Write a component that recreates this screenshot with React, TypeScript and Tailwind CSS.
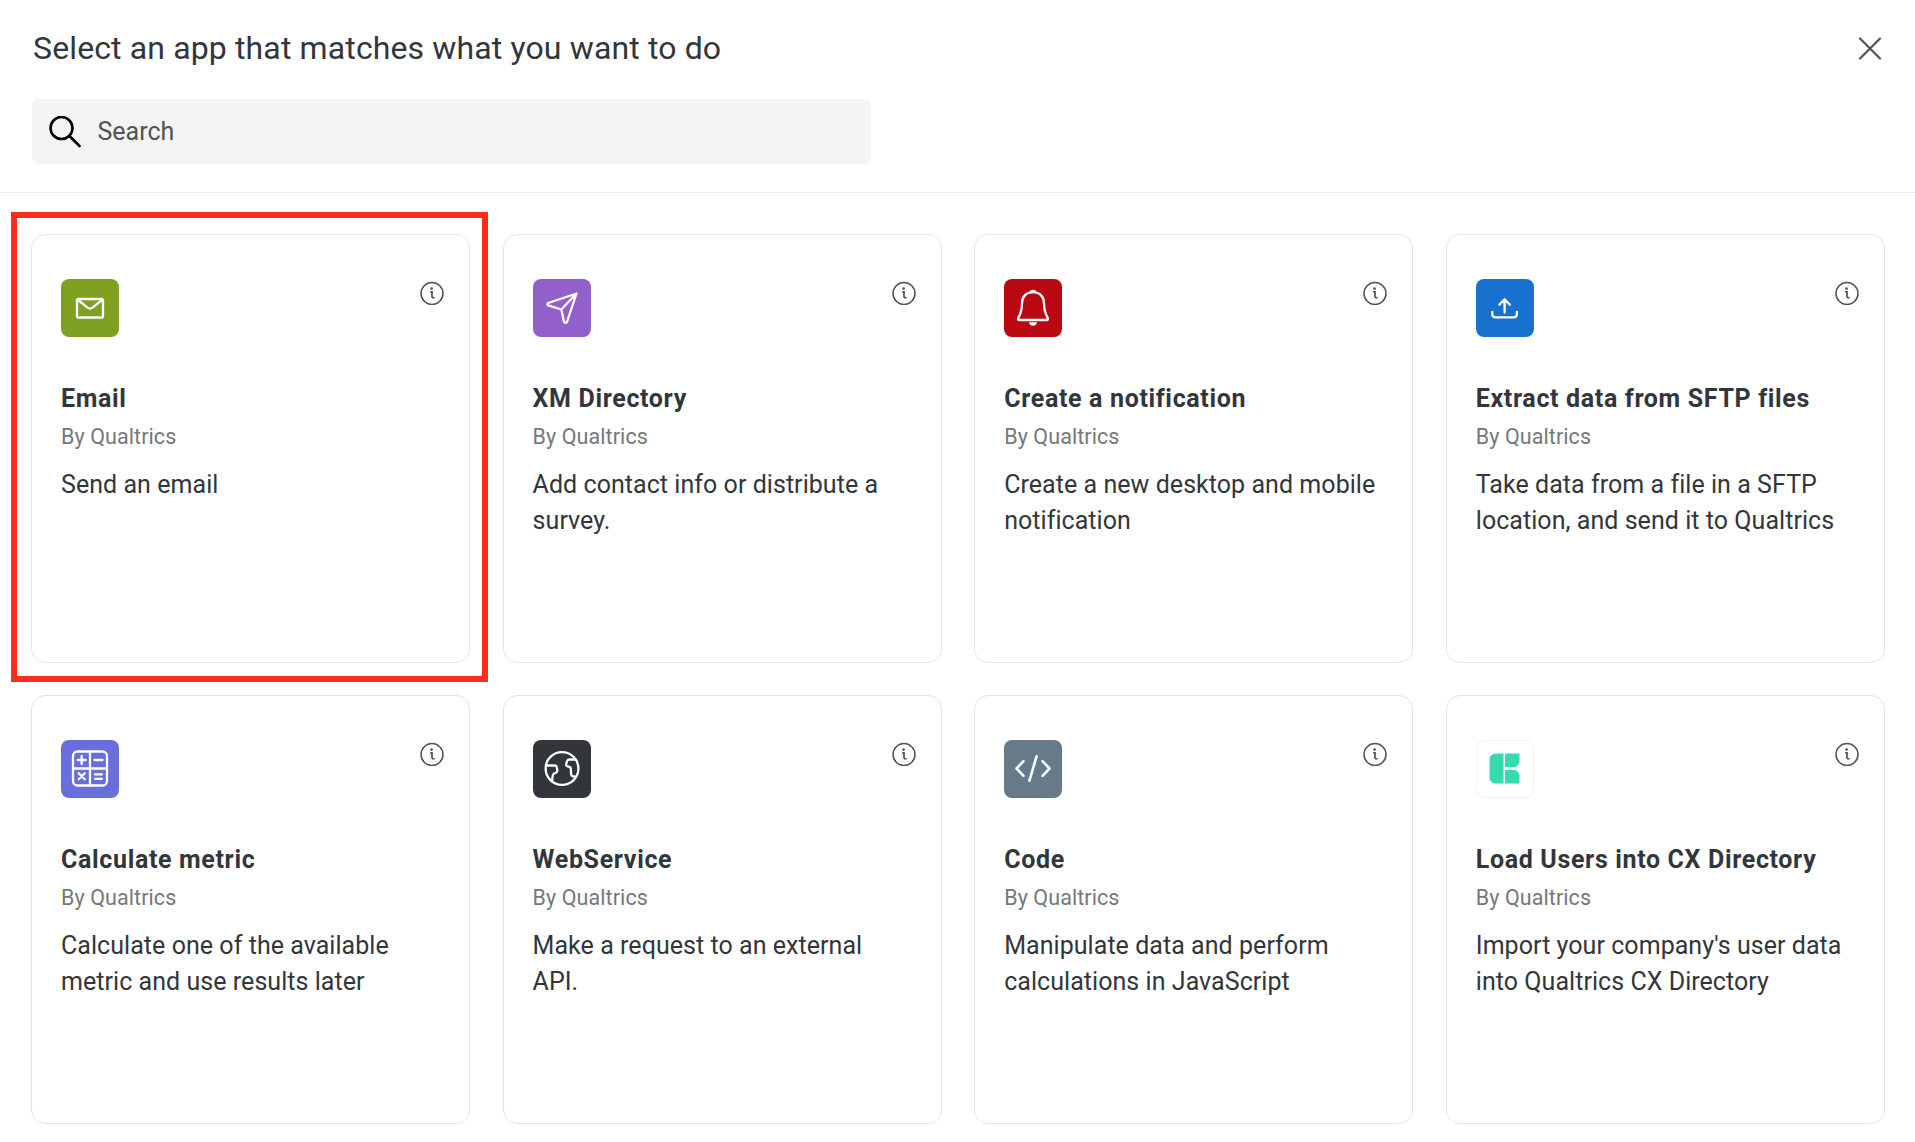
import type { ReactNode } from "react";

type AppCard = {
  title: string;
  description: string[];
  tile: string;
  icon: ReactNode;
  highlighted?: boolean;
};

const line = {
  fill: "none",
  stroke: "currentColor",
  strokeWidth: 2.3,
  strokeLinecap: "round" as const,
  strokeLinejoin: "round" as const,
};

const cards: AppCard[] = [
  {
    title: "Email",
    description: ["Send an email"],
    tile: "bg-[#7ea122]",
    highlighted: true,
    icon: (
      <g {...line}>
        <rect x="16" y="20" width="26" height="18.5" rx="1.5" />
        <path d="M17 21l9.5 7.6q2.5 1.8 5 0L41 21" />
      </g>
    ),
  },
  {
    title: "XM Directory",
    description: ["Add contact info or distribute a", "survey."],
    tile: "bg-[#925fcc]",
    icon: (
      <path
        {...line}
        d="M43.5 14.5L15.2 24Q13.5 25.2 15.2 26.3L28.3 30.5L31 42.8Q32.6 45 34 42.8L43.5 14.5L28.3 30.5"
      />
    ),
  },
  {
    title: "Create a notification",
    description: ["Create a new desktop and mobile", "notification"],
    tile: "bg-[#b90812]",
    icon: (
      <g>
        <path
          {...line}
          d="M29 13.2C22 13.2 18 18 18 24C18 31 17.4 33.5 14.6 38.2Q13.3 41 15 41H43Q44.7 41 43.4 38.2C40.6 33.5 40 31 40 24C40 18 36 13.2 29 13.2z"
        />
        <path d="M26 13q0-2.2 3-2.2T32 13zM25 43.2h8q-.7 3.6-4 3.6t-4-3.6z" fill="currentColor" />
      </g>
    ),
  },
  {
    title: "Extract data from SFTP files",
    description: ["Take data from a file in a SFTP", "location, and send it to Qualtrics"],
    tile: "bg-[#1971cf]",
    icon: (
      <path {...line} d="M28.6 33.5V20.5M23.4 25.6l5.2-5.3 5.2 5.3M16.3 33v2.3q0 3 3 3h18.6q3 0 3-3V33" />
    ),
  },
  {
    title: "Calculate metric",
    description: ["Calculate one of the available", "metric and use results later"],
    tile: "bg-[#686edb]",
    icon: (
      <g {...line}>
        <rect x="12" y="11.5" width="34" height="34" rx="4.5" />
        <path d="M29 11.5v34M12 28.5h34M16.7 20h8M20.7 16v8M33.5 20h8M17.7 33.2l6 6M23.7 33.2l-6 6M34 34.3h7M34 38.8h7" />
      </g>
    ),
  },
  {
    title: "WebService",
    description: ["Make a request to an external", "API."],
    tile: "bg-[#32363a]",
    icon: (
      <g {...line}>
        <circle cx="29" cy="28.5" r="16.4" />
        <path d="M13.5 25.5h8.2q1.7 0 2 1.7l.6 3q.2 1.5-1 2.3l-2.5 1.3q-1 .6-1.1 2l-.6 5M42.5 19.5h-6.2q-1.8 0-2.3 1.7l-.8 3q-.3 1.8 1.3 2.2l2 .5q1.2 .4 1.3 1.6l.4 6.2q.2 1.5 1.5 1.7h2" />
      </g>
    ),
  },
  {
    title: "Code",
    description: ["Manipulate data and perform", "calculations in JavaScript"],
    tile: "bg-[#677a8a]",
    icon: <path {...line} strokeWidth={2.6} d="M19.5 21.2l-7 7.3 7 7.3M38.5 21.2l7 7.3-7 7.3M32.6 16.3L25.4 40.7" />,
  },
  {
    title: "Load Users into CX Directory",
    description: ["Import your company's user data", "into Qualtrics CX Directory"],
    tile: "border border-[#f2f2f2] bg-white",
    icon: (
      <path
        fill="#33dbae"
        d="M19 13h8.5v31H19q-6-1-6-6V19q0-5 6-6zM29 13h15v8.5q-1 5-5.5 5.5H29zM29 30h9.5q4.5 .5 5.5 5.5V44H29z"
      />
    ),
  },
];

function InfoIcon() {
  return (
    <svg viewBox="0 0 24 24" className="mt-[2px] size-6 text-[#505357]" fill="none" stroke="currentColor">
      <circle cx="12" cy="12.5" r="11" strokeWidth="1.5" />
      <path d="M10.2 10.8H12V15.8Q12 17 14.6 16.7" strokeWidth="1.7" />
      <circle cx="11.6" cy="7.6" r="1.3" fill="currentColor" stroke="none" />
    </svg>
  );
}

function Card({ card }: { card: AppCard }) {
  return (
    <article className="relative h-[429px] rounded-[14px] border border-[#e4e5e6] px-[29px] pt-[44px]">
      {card.highlighted && (
        <div className="pointer-events-none absolute -top-[23px] -left-[21px] h-[470px] w-[477px] border-6 border-[#ff2b1d]" />
      )}
      <div className="flex items-start justify-between">
        <div className={`size-[58px] overflow-hidden rounded-[8px] text-white ${card.tile}`}>
          <svg viewBox="0 0 58 58" className="size-full">
            {card.icon}
          </svg>
        </div>
        <div className="-mr-[4px]">
          <InfoIcon />
        </div>
      </div>
      <h2 className="mt-[44px] text-[25px] leading-[36px] font-bold tracking-[0.65px] whitespace-nowrap">{card.title}</h2>
      <p className="mt-[5px] text-[21.5px] leading-[30px] tracking-[0.08px] text-[#75787b]">By Qualtrics</p>
      <p className="mt-[15px] text-[25px] leading-[36px] tracking-[0.05px] whitespace-nowrap">
        {card.description.map((text) => (
          <span key={text} className="block">
            {text}
          </span>
        ))}
      </p>
    </article>
  );
}

export default function App() {
  return (
    <div className="h-[1142px] overflow-hidden bg-white font-['Roboto',sans-serif] text-[#32363a]">
      <header className="h-[193px] border-b border-[#ebecec] px-[32px] pt-[28px]">
        <div className="flex items-center justify-between">
          <h1 className="pl-[1px] text-[32px] leading-[40px] tracking-[0.13px]">
            Select an app that matches what you want to do
          </h1>
          <svg
            viewBox="0 0 24 24"
            className="mr-[1.5px] size-6 text-[#505357]"
            fill="none"
            stroke="currentColor"
            strokeWidth="2.2"
            strokeLinecap="round"
          >
            <path d="M2 2.5l20 20M22 2.5L2 22.5" />
          </svg>
        </div>
        <div className="mt-[31px] flex h-[65px] w-[839px] items-center gap-[17px] rounded-[6px] bg-[#f4f4f4] pl-[16.5px] text-[25px] text-[#505357]">
          <svg
            viewBox="0 0 32 32"
            className="size-8 text-black"
            fill="none"
            stroke="currentColor"
            strokeWidth="2.6"
            strokeLinecap="round"
          >
            <circle cx="12.5" cy="12" r="11" />
            <path d="M20.5 20l10 10" />
          </svg>
          <span>Search</span>
        </div>
      </header>
      <main className="grid grid-cols-4 gap-x-[32.4px] gap-y-[32px] pt-[41px] pr-[30px] pl-[31px]">
        {cards.map((card) => (
          <Card key={card.title} card={card} />
        ))}
      </main>
    </div>
  );
}
